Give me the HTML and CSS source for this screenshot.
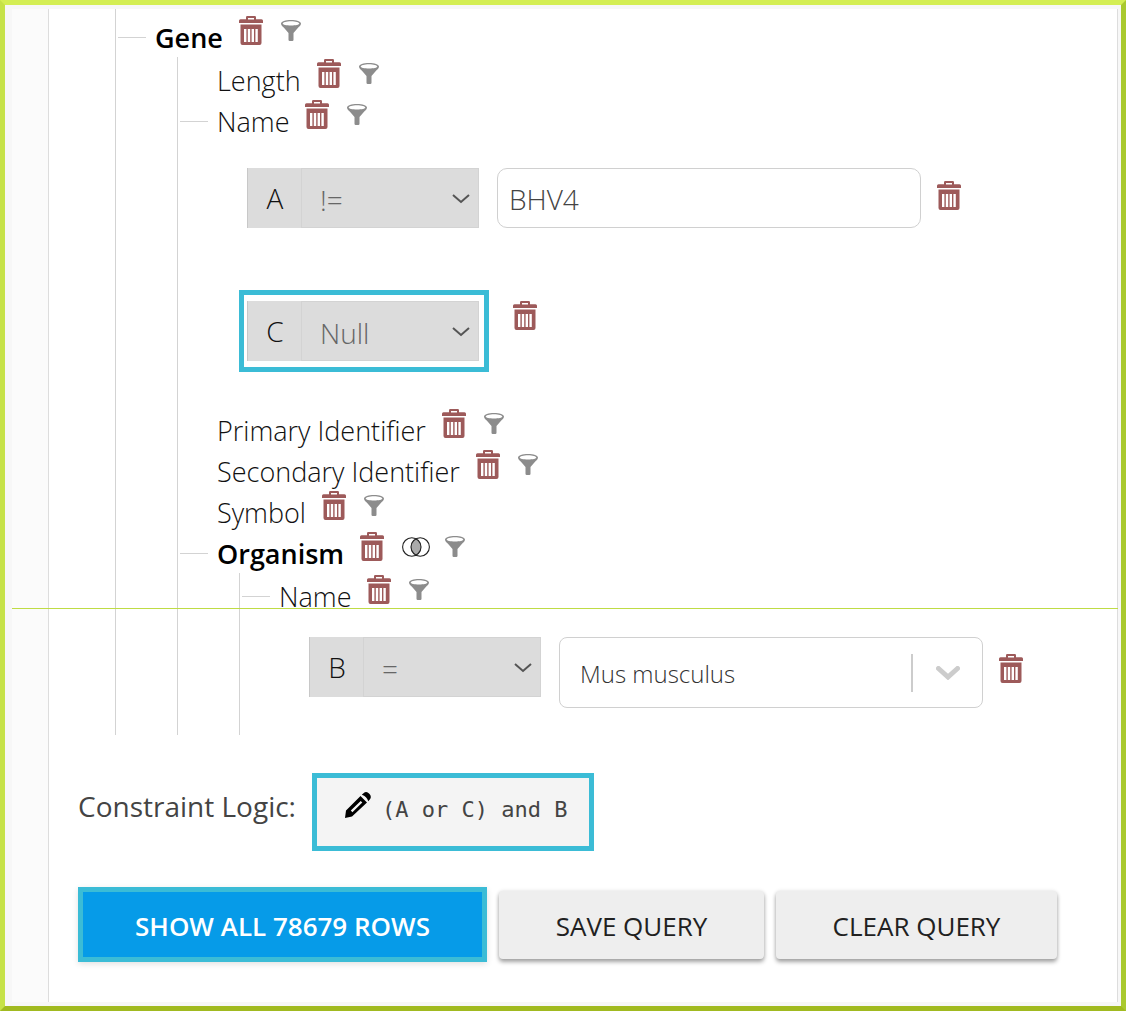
FILE: index.html
```html
<!DOCTYPE html>
<html lang="en">
<head>
<meta charset="utf-8">
<meta name="viewport" content="width=device-width, initial-scale=1">
<title>Query Editor</title>
<link rel="stylesheet" href="styles.css">
</head>
<body>
<svg class="symbols" aria-hidden="true">
  <symbol id="trash" viewBox="0 0 24 30">
    <path fill-rule="evenodd" d="M7 3.2V1.2Q7 0 8.200 0h7.600Q17 0 17 1.200v2h5.500q1.500 0 1.500 1.500V7H0V4.700q0-1.500 1.500-1.500zM9 2v1.500h6V2zM1.500 8.500h21V27q0 2-2 2h-17q-2 0-2-2zM5 13v13h2.400V13zm3.800 0v13h2.400V13zm3.800 0v13H15V13zm3.800 0v13h2.400V13z"/>
  </symbol>
  <symbol id="funnel" viewBox="0 0 20 21">
    <path fill-rule="evenodd" d="M10 0c5.500 0 10 1.500 10 3.600 0 1.800-1.600 3-3.600 4.900L12.500 13v6.800q0 1.200-1.200 1.200H8.700q-1.200 0-1.200-1.200V13L3.600 8.500C1.600 6.600 0 5.400 0 3.600 0 1.500 4.500 0 10 0zm0 1.200C5.200 1.200 1.700 2.400 1.700 3.600S5.200 5.600 10 5.600s8.300-.8 8.300-2S14.800 1.200 10 1.200z"/>
  </symbol>
  <symbol id="venn" viewBox="0 0 28 20">
    <path fill="#aaa" d="M14 1.700a9.200 9.200 0 0 1 0 16.600a9.200 9.200 0 0 1 0-16.600z"/>
    <circle cx="9.800" cy="10" r="9.200" fill="none" stroke="#222" stroke-width="1.100"/>
    <circle cx="18.200" cy="10" r="9.200" fill="none" stroke="#222" stroke-width="1.100"/>
  </symbol>
  <symbol id="pencil" viewBox="0 0 26 26">
    <path fill-rule="evenodd" d="M15.500 4l6.500 6.500L7 24.500 0 26l1-7.500zM15.700 9L5.800 18.600l1.600 1.700L17.300 10.600z"/>
    <path d="M16.800 2.800l1.700-1.600q3-2.400 5.800 .5t.5 5.800l-1.600 1.700q-1.300-4.700-6.400-6.400z"/>
  </symbol>
</svg>

<div class="frame">
  <aside class="gutter"></aside>
  <main class="panel">
    <ul class="tree root">
      <li>
        <div class="node linked">
          <strong class="name">Gene</strong>
          <button class="icon" aria-label="Remove Gene"><svg class="trash"><use href="#trash"/></svg></button>
          <button class="icon" aria-label="Filter Gene"><svg class="funnel"><use href="#funnel"/></svg></button>
        </div>
        <ul class="tree">
          <li>
            <div class="node">
              <span class="name">Length</span>
              <button class="icon" aria-label="Remove Length"><svg class="trash"><use href="#trash"/></svg></button>
              <button class="icon" aria-label="Filter Length"><svg class="funnel"><use href="#funnel"/></svg></button>
            </div>
          </li>
          <li>
            <div class="node linked">
              <span class="name">Name</span>
              <button class="icon" aria-label="Remove Name"><svg class="trash"><use href="#trash"/></svg></button>
              <button class="icon" aria-label="Filter Name"><svg class="funnel"><use href="#funnel"/></svg></button>
            </div>
            <div class="constraints">
              <div class="constraint">
                <div class="operator">
                  <label class="code" for="op-a">A</label>
                  <div class="picker">
                    <select id="op-a"><option>!=</option><option>=</option><option>Null</option></select>
                    <svg class="chevron" viewBox="0 0 18 10"><path d="M1 1l8 7 8-7"/></svg>
                  </div>
                </div>
                <input class="value" type="text" value="BHV4" aria-label="Value for constraint A">
                <button class="icon" aria-label="Remove constraint A"><svg class="trash"><use href="#trash"/></svg></button>
              </div>
              <div class="constraint marked">
                <div class="highlight">
                  <div class="operator">
                    <label class="code" for="op-c">C</label>
                    <div class="picker">
                      <select id="op-c"><option>Null</option><option>=</option><option>!=</option></select>
                      <svg class="chevron" viewBox="0 0 18 10"><path d="M1 1l8 7 8-7"/></svg>
                    </div>
                  </div>
                </div>
                <button class="icon" aria-label="Remove constraint C"><svg class="trash"><use href="#trash"/></svg></button>
              </div>
            </div>
          </li>
          <li>
            <div class="node">
              <span class="name">Primary Identifier</span>
              <button class="icon" aria-label="Remove Primary Identifier"><svg class="trash"><use href="#trash"/></svg></button>
              <button class="icon" aria-label="Filter Primary Identifier"><svg class="funnel"><use href="#funnel"/></svg></button>
            </div>
          </li>
          <li>
            <div class="node">
              <span class="name">Secondary Identifier</span>
              <button class="icon" aria-label="Remove Secondary Identifier"><svg class="trash"><use href="#trash"/></svg></button>
              <button class="icon" aria-label="Filter Secondary Identifier"><svg class="funnel"><use href="#funnel"/></svg></button>
            </div>
          </li>
          <li>
            <div class="node">
              <span class="name">Symbol</span>
              <button class="icon" aria-label="Remove Symbol"><svg class="trash"><use href="#trash"/></svg></button>
              <button class="icon" aria-label="Filter Symbol"><svg class="funnel"><use href="#funnel"/></svg></button>
            </div>
          </li>
          <li>
            <div class="node linked">
              <strong class="name">Organism</strong>
              <button class="icon" aria-label="Remove Organism"><svg class="trash"><use href="#trash"/></svg></button>
              <button class="icon" aria-label="Join style of Organism"><svg class="venn"><use href="#venn"/></svg></button>
              <button class="icon" aria-label="Filter Organism"><svg class="funnel"><use href="#funnel"/></svg></button>
            </div>
            <ul class="tree">
              <li>
                <div class="node linked">
                  <span class="name">Name</span>
                  <button class="icon" aria-label="Remove Organism Name"><svg class="trash"><use href="#trash"/></svg></button>
                  <button class="icon" aria-label="Filter Organism Name"><svg class="funnel"><use href="#funnel"/></svg></button>
                </div>
                <div class="constraints last">
                  <div class="constraint">
                    <div class="operator">
                      <label class="code" for="op-b">B</label>
                      <div class="picker">
                        <select id="op-b"><option>=</option><option>!=</option><option>Null</option></select>
                        <svg class="chevron" viewBox="0 0 18 10"><path d="M1 1l8 7 8-7"/></svg>
                      </div>
                    </div>
                    <div class="combo">
                      <input type="text" role="combobox" aria-expanded="false" value="Mus musculus" aria-label="Value for constraint B">
                      <button class="open" aria-label="Show values"><svg viewBox="0 0 24 14"><path d="M2.500 2.500l9.500 8.500 9.500-8.500"/></svg></button>
                    </div>
                    <button class="icon" aria-label="Remove constraint B"><svg class="trash"><use href="#trash"/></svg></button>
                  </div>
                </div>
              </li>
            </ul>
          </li>
        </ul>
      </li>
    </ul>

    <div class="logic">
      <span class="logic-label" id="logic-label">Constraint Logic:</span>
      <button class="logic-box" aria-describedby="logic-label">
        <svg class="pencil"><use href="#pencil"/></svg>
        <code>(A or C) and B</code>
      </button>
    </div>

    <div class="actions">
      <button class="action primary">SHOW ALL 78679 ROWS</button>
      <button class="action save">SAVE QUERY</button>
      <button class="action clear">CLEAR QUERY</button>
    </div>
  </main>
  <div class="seam"></div>
</div>
</body>
</html>
```

FILE: styles.css
```css
* { box-sizing: border-box; }

body {
  margin: 0;
  font-family: "Open Sans", "Noto Sans", sans-serif;
  font-size: 28px;
  font-weight: 300;
  color: #111;
  background: #f7f7f7;
}

button, input, select {
  font: inherit;
  color: inherit;
  margin: 0;
  border-radius: 0;
}

button { cursor: pointer; }

svg { display: block; }

.symbols { position: absolute; width: 0; height: 0; }

.frame {
  position: relative;
  display: flex;
  min-height: 100vh;
  padding: 4px 3px 4px 7px;
  border: 5px solid;
  border-color: #d4ee54 #a9c92f #a1ba20 #c6e248;
}

.gutter { width: 36px; background: #fbfbfb; }

.panel {
  flex: 1;
  min-width: 0;
  padding-bottom: 40px;
  background: #fff;
  border-left: 1px solid #ddd;
  border-right: 1px solid #ddd;
}

.seam {
  position: absolute;
  left: 7px;
  right: 3px;
  top: 603px;
  height: 1px;
  background: #bfdc45;
}

/* Tree */
.tree {
  list-style: none;
  margin: 0 0 0 61px;
  padding: 2px 0 0;
  border-left: 1px solid #d3d3d3;
}

.tree.root { margin-left: 66px; padding-top: 7px; }

.node { display: flex; height: 41px; }

.node::before {
  content: "";
  width: 28px;
  height: 1px;
  margin: 21px 9px 0 2px;
}

.node.linked::before { background: #d3d3d3; }

.name {
  margin-right: 16px;
  font-size: 27px;
  line-height: 43px;
  white-space: nowrap;
}

strong.name { font-weight: 600; color: #000; }

.icon {
  align-self: flex-start;
  flex: none;
  padding: 0;
  border: 0;
  background: none;
}

.node .icon { margin-right: 18px; }

.trash { width: 24px; height: 30px; fill: #9d5a5a; }
.funnel { width: 20px; height: 21px; margin-top: 4px; fill: #8c8c8c; }
.venn { width: 28px; height: 20px; margin-top: 5px; }
.node .icon:has(.venn) { margin-right: 15px; }

/* Constraints */
.constraints {
  display: flex;
  flex-direction: column;
  gap: 62px;
  padding: 27px 0 37px 69px;
}

.constraints.last { padding: 21px 0 27px 69px; }

.constraint { display: flex; padding-right: 40px; }
.constraint .icon { margin: 13px 0 0 16px; }
.constraint .combo + .icon { margin-top: 17px; }
.constraint.marked .icon { margin: 11px 0 0 24px; }

.highlight {
  margin-left: -8px;
  padding: 6px 5px 6px 3px;
  border: 5px solid #3bbcd6;
}

.operator {
  flex: none;
  display: flex;
  width: 232px;
  height: 60px;
  background: #dcdcdc;
  border-left: 1px solid #c8c8c8;
}

.code { width: 53px; padding-left: 1px; line-height: 60px; text-align: center; }

.picker { flex: 1; display: grid; align-items: center; }

.picker select, .chevron { grid-area: 1 / 1; }

.picker select {
  appearance: none;
  width: 100%;
  height: 60px;
  padding: 4px 30px 0 18px;
  color: #666;
  background: none;
  border: 1px solid #d3d3d3;
}

.chevron {
  justify-self: end;
  width: 18px;
  height: 10px;
  margin: 2px 9px 0 0;
  pointer-events: none;
  fill: none;
  stroke: #555;
  stroke-width: 2;
}

.value, .combo {
  flex: 0 1 424px;
  min-width: 0;
  margin-left: 18px;
  background: #fff;
  border: 1px solid #d0d0d0;
}

.value { height: 60px; padding: 2px 11px 0; color: #444; border-radius: 10px; }

.combo {
  display: flex;
  align-items: center;
  height: 71px;
  padding: 0 22px 0 20px;
  border-radius: 8px;
}

.combo input {
  flex: 1;
  min-width: 0;
  padding: 2px 0 0;
  border: 0;
  color: #333;
  font-size: 24px;
  background: none;
}

.open {
  padding: 12px 0 12px 23px;
  border: 0;
  border-left: 2px solid #ccc;
  background: none;
}

.open svg {
  width: 24px;
  height: 14px;
  fill: none;
  stroke: #ccc;
  stroke-width: 5;
  stroke-linecap: round;
}

/* Constraint logic */
.logic {
  display: flex;
  gap: 16px;
  padding: 38px 29px 0;
  color: #444;
}

.logic-label { font-weight: 400; line-height: 66px; white-space: nowrap; }

.logic-box {
  display: flex;
  gap: 11px;
  width: 282px;
  height: 78px;
  padding: 14px 0 0 28px;
  background: #f4f4f4;
  border: 5px solid #3bbcd6;
}

.pencil { width: 26px; height: 26px; fill: #000; }

.logic-box code {
  font: 22px/36px "DejaVu Sans Mono", monospace;
  white-space: nowrap;
}

/* Buttons */
.actions {
  display: flex;
  flex-wrap: wrap;
  align-items: center;
  gap: 12px;
  padding: 36px 29px 0;
}

.action {
  height: 68px;
  padding: 2px 0 0;
  border: 0;
  border-radius: 4px;
  background: #eee;
  color: #212121;
  font-size: 26px;
  font-weight: 500;
  box-shadow: 0 3px 4px rgba(0, 0, 0, .35), 0 0 4px rgba(0, 0, 0, .1);
}

.save { width: 265px; }
.clear { width: 281px; }

.primary {
  width: 409px;
  height: 75px;
  border: 5px solid #3bbcd6;
  border-radius: 0;
  background: #069be8;
  color: #fff;
  font-weight: 600;
  box-shadow: 0 2px 6px rgba(0, 0, 0, .12);
}
```
